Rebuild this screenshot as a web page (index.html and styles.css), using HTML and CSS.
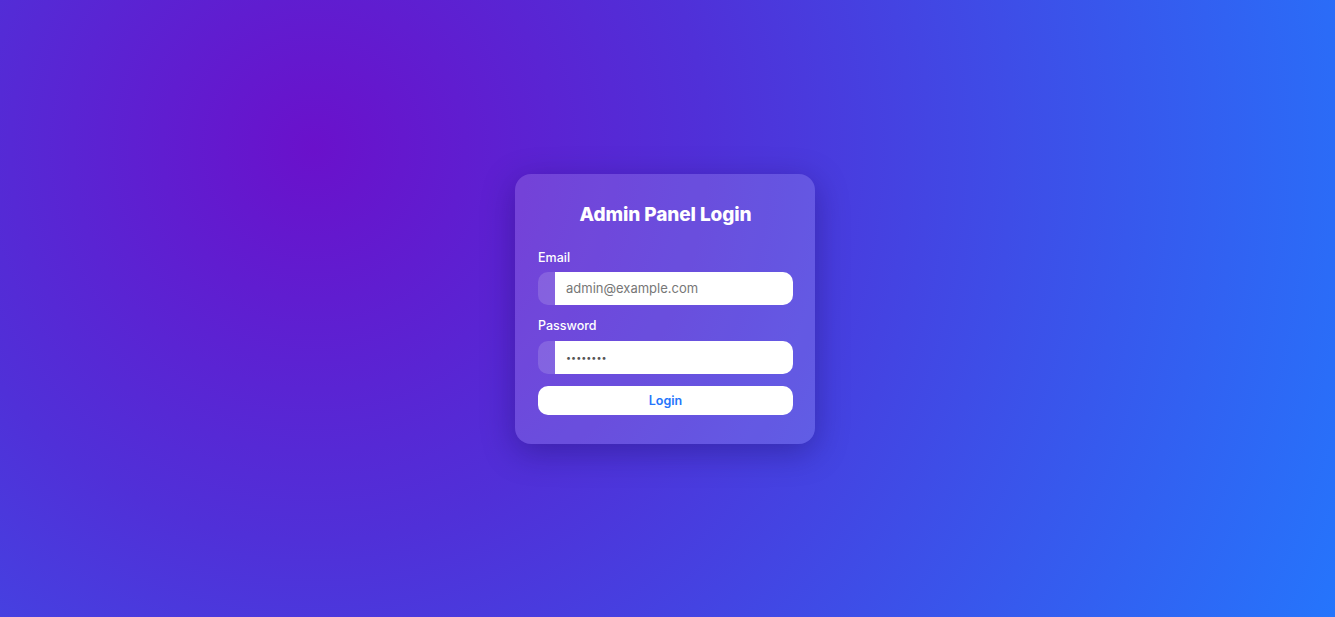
FILE: index.html
```html
<!DOCTYPE html>
<html lang="en">
<head>
<meta charset="utf-8">
<title>Admin Panel Login</title>
<link rel="stylesheet" href="styles.css">
</head>
<body>
<main class="page">
  <form class="card">
    <h1 class="title">Admin Panel Login</h1>
    <div class="field">
      <label class="label" for="email">Email</label>
      <div class="group">
        <span class="addon"></span>
        <input class="input" id="email" type="email" placeholder="admin@example.com">
      </div>
    </div>
    <div class="field field-second">
      <label class="label" for="password">Password</label>
      <div class="group">
        <span class="addon"></span>
        <input class="input input-pass" id="password" type="password" value="password">
      </div>
    </div>
    <button class="btn" type="button">Login</button>
  </form>
</main>
</body>
</html>
```

FILE: styles.css
```css
* { box-sizing: border-box; }
html, body { margin: 0; height: 100%; }
body {
  font-family: "Inter", "Noto Sans", sans-serif;
  background: radial-gradient(circle farthest-corner at 23.5% 24%, #6a11cb 0%, #5030d8 35%, #2575fc 100%);
  overflow: hidden;
}
.page {
  height: 100vh;
  display: flex;
  align-items: center;
  justify-content: center;
  padding-right: 5px;
}
.card {
  width: 300px;
  padding: 26px 22px 29px 23px;
  border-radius: 16px;
  background: rgba(255, 255, 255, 0.15);
  box-shadow: 0 8px 32px rgba(20, 10, 80, 0.35);
  display: flex;
  flex-direction: column;
}
.title {
  margin: 0 0 17px;
  height: 30px;
  line-height: 30px;
  text-align: center;
  color: #fff;
  font-size: 19px;
  font-weight: 800;
  letter-spacing: -0.1px;
}
.field { display: flex; flex-direction: column; }
.field-second { margin-top: 10px; }
.label {
  color: #fff;
  font-size: 12.5px;
  font-weight: 500;
  line-height: 20px;
  padding-top: 1px;
  margin-bottom: 4px;
}
.field-second .label { margin-bottom: 5px; }
.group { display: flex; height: 33px; }
.addon {
  width: 17px;
  background: rgba(255, 255, 255, 0.15);
  border-radius: 10px 0 0 10px;
}
.input {
  flex: 1;
  min-width: 0;
  border: 0;
  outline: 0;
  background: #fff;
  border-radius: 0 10px 10px 0;
  padding: 0 11px;
  font-family: inherit;
  font-size: 13px;
  color: #555;
}
.input::placeholder { color: #777; }
.input-pass { font-size: 9px; letter-spacing: 0; }
.btn {
  margin-top: 12px;
  height: 29px;
  padding-top: 1px;
  border: 0;
  border-radius: 10px;
  background: #fff;
  color: #2575fc;
  font-family: inherit;
  font-size: 12.5px;
  font-weight: 600;
}
```
